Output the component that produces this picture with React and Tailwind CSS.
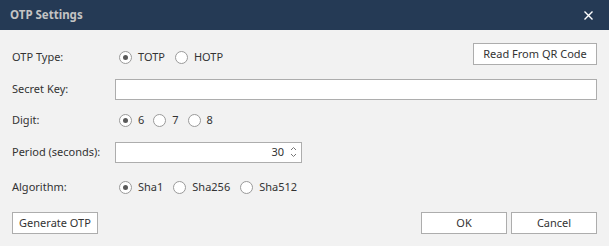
import React from "react";

function Radio({ checked, label }) {
  return (
    <div className="flex items-center">
      <span className="w-[13px] h-[13px] rounded-full border border-[#9a9a9a] bg-white flex items-center justify-center">
        {checked && <span className="w-[5px] h-[5px] rounded-full bg-[#5a5a5a]" />}
      </span>
      <span className="ml-[6px]">{label}</span>
    </div>
  );
}

function Btn({ children, className = "" }) {
  return (
    <div className={"h-[22px] border border-[#adadad] bg-white flex items-center justify-center text-[#333] " + className}>
      {children}
    </div>
  );
}

export default function App() {
  return (
    <div
      className="w-[609px] h-[246px] bg-[#f2f2f2] flex flex-col text-[11px] text-[#333] overflow-hidden"
      style={{ fontFamily: '"Noto Sans", "Open Sans", sans-serif' }}
    >
      <div className="h-[30px] bg-[#253a55] flex items-center justify-between pl-[10px] pr-[16px] shrink-0">
        <span className="font-bold text-[#c4c4c4] text-[11.5px]">OTP Settings</span>
        <svg width="9" height="9" viewBox="0 0 9 9">
          <path d="M0.5 0.5 L8.5 8.5 M8.5 0.5 L0.5 8.5" stroke="white" strokeWidth="1.4" />
        </svg>
      </div>
      <div className="flex flex-col pl-[12px] pr-[12px]">
        <div className="mt-[12px] h-[31px] flex items-center justify-between">
          <div className="flex items-center">
            <span className="w-[103px]">OTP Type:</span>
            <div className="flex items-center gap-[10px] ml-[4px]">
              <Radio checked label="TOTP" />
              <Radio label="HOTP" />
            </div>
          </div>
          <Btn className="self-start mt-[1px] h-[21px] w-[124px]">Read From QR Code</Btn>
        </div>
        <div className="mt-[5px] h-[22px] flex items-center">
          <span className="w-[103px]">Secret Key:</span>
          <div className="flex-1 h-[21px] border border-[#adadad] bg-white" />
        </div>
        <div className="mt-[9px] h-[22px] flex items-center">
          <span className="w-[103px]">Digit:</span>
          <div className="flex items-center gap-[9px] ml-[4px]">
            <Radio checked label="6" />
            <Radio label="7" />
            <Radio label="8" />
          </div>
        </div>
        <div className="mt-[10px] h-[22px] flex items-center">
          <span className="w-[103px]">Period (seconds):</span>
          <div className="w-[187px] h-[21px] border border-[#adadad] bg-white flex items-center justify-end pr-[4px]">
            <span className="mr-[6px]">30</span>
            <svg width="7" height="14" viewBox="0 0 7 14">
              <path d="M1 5 L3.5 2.5 L6 5" stroke="#777" fill="none" strokeWidth="1" />
              <path d="M1 9 L3.5 11.5 L6 9" stroke="#777" fill="none" strokeWidth="1" />
            </svg>
          </div>
        </div>
        <div className="mt-[13px] h-[22px] flex items-center">
          <span className="w-[103px]">Algorithm:</span>
          <div className="flex items-center gap-[10px] ml-[4px]">
            <Radio checked label="Sha1" />
            <Radio label="Sha256" />
            <Radio label="Sha512" />
          </div>
        </div>
        <div className="mt-[14px] h-[22px] flex items-center justify-between">
          <Btn className="w-[86px]">Generate OTP</Btn>
          <div className="flex gap-[4px]">
            <Btn className="w-[86px]">OK</Btn>
            <Btn className="w-[86px]">Cancel</Btn>
          </div>
        </div>
      </div>
    </div>
  );
}
